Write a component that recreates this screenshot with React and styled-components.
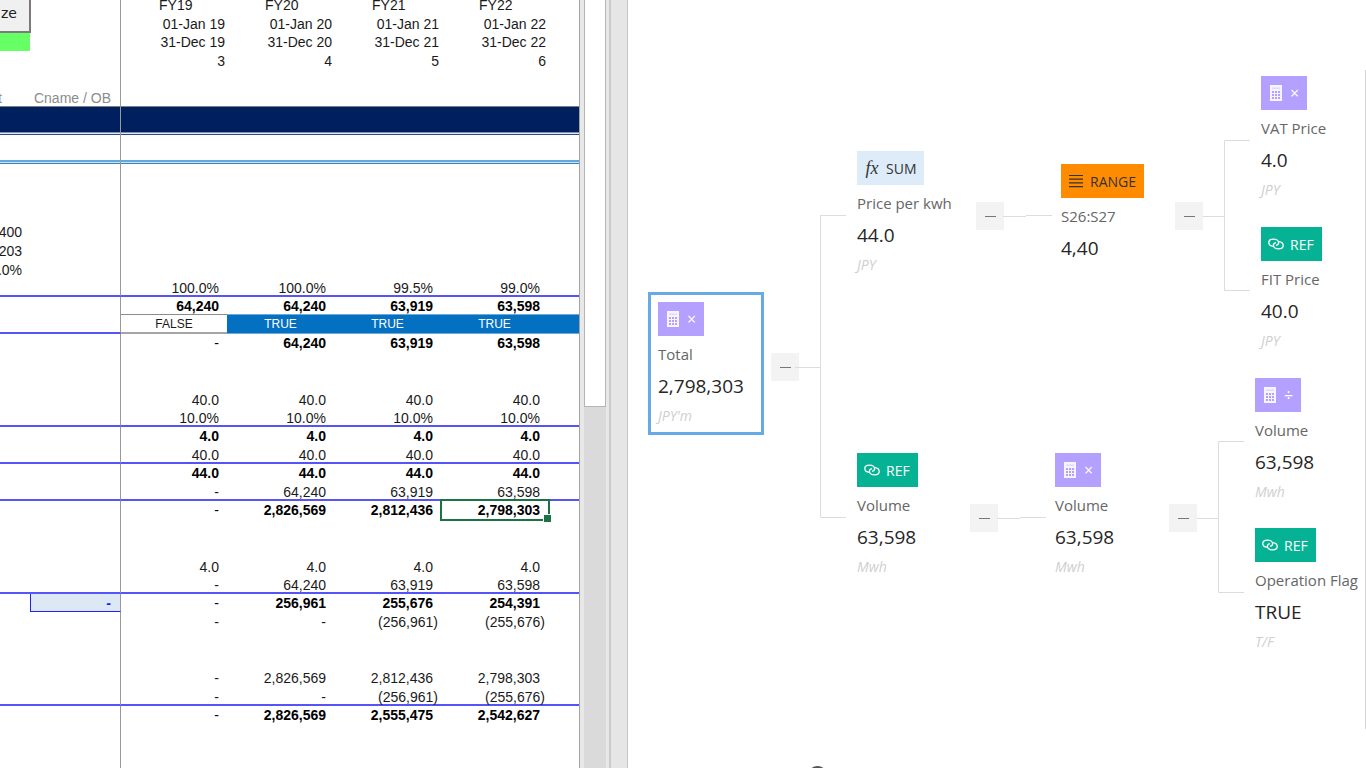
import React from 'react';
import styled, { createGlobalStyle } from 'styled-components';

const columns = [30, 91, 106, 107, 107, 107, 31];

// a, b: the two columns left of the freeze line, v: the four yearly values
const rows = [
  { h: 19, v: ['FY19', 'FY20', 'FY21', 'FY22'], kind: 'year', button: true },
  { h: 19, v: ['01-Jan 19', '01-Jan 20', '01-Jan 21', '01-Jan 22'], kind: 'date', underButton: true },
  { h: 18, v: ['31-Dec 19', '31-Dec 20', '31-Dec 21', '31-Dec 22'], kind: 'date', check: true },
  { h: 20, v: ['3', '4', '5', '6'], kind: 'date' },
  { h: 19 },
  { h: 17, a: 't', b: 'Cname / OB', kind: 'caption', line: 'grey' },
  { h: 28, band: 'navy' },
  { h: 29, band: 'sky' },
  { h: 58 },
  { h: 19, a: '400' },
  { h: 20, a: '203' },
  { h: 18, a: '.0%' },
  { h: 18, v: ['100.0%', '100.0%', '99.5%', '99.0%'], line: 'blue' },
  { h: 17, v: ['64,240', '64,240', '63,919', '63,598'], bold: true },
  { h: 20, v: ['FALSE', 'TRUE', 'TRUE', 'TRUE'], kind: 'flag', line: 'blue' },
  { h: 18, v: ['-', '64,240', '63,919', '63,598'], bold: true },
  { h: 38 },
  { h: 19, v: ['40.0', '40.0', '40.0', '40.0'] },
  { h: 18, v: ['10.0%', '10.0%', '10.0%', '10.0%'], line: 'blue' },
  { h: 18, v: ['4.0', '4.0', '4.0', '4.0'], bold: true },
  { h: 19, v: ['40.0', '40.0', '40.0', '40.0'], line: 'blue' },
  { h: 18, v: ['44.0', '44.0', '44.0', '44.0'], bold: true },
  { h: 19, v: ['-', '64,240', '63,919', '63,598'], line: 'blue' },
  { h: 18, v: ['-', '2,826,569', '2,812,436', '2,798,303'], bold: true, selected: 3 },
  { h: 38 },
  { h: 19, v: ['4.0', '4.0', '4.0', '4.0'] },
  { h: 18, v: ['-', '64,240', '63,919', '63,598'], line: 'blue' },
  { h: 18, b: '-', v: ['-', '256,961', '255,676', '254,391'], bold: true, entry: true },
  { h: 19, v: ['-', '-', '(256,961)', '(255,676)'] },
  { h: 38 },
  { h: 18, v: ['-', '2,826,569', '2,812,436', '2,798,303'] },
  { h: 19, v: ['-', '-', '(256,961)', '(255,676)'], line: 'blue' },
  { h: 17, v: ['-', '2,826,569', '2,555,475', '2,542,627'], bold: true },
  { h: 60 },
];

const nodes = [
  { x: 30, y: 302, type: 'calc', op: '×', label: 'Total', value: '2,798,303', unit: "JPY'm", active: true },
  { x: 229, y: 151, type: 'sum', op: 'SUM', label: 'Price per kwh', value: '44.0', unit: 'JPY' },
  { x: 229, y: 453, type: 'ref', op: 'REF', label: 'Volume', value: '63,598', unit: 'Mwh' },
  { x: 433, y: 164, type: 'range', op: 'RANGE', label: 'S26:S27', value: '4,40' },
  { x: 427, y: 453, type: 'calc', op: '×', label: 'Volume', value: '63,598', unit: 'Mwh' },
  { x: 633, y: 76, type: 'calc', op: '×', label: 'VAT Price', value: '4.0', unit: 'JPY' },
  { x: 633, y: 227, type: 'ref', op: 'REF', label: 'FIT Price', value: '40.0', unit: 'JPY' },
  { x: 627, y: 378, type: 'calc', op: '÷', label: 'Volume', value: '63,598', unit: 'Mwh' },
  { x: 627, y: 528, type: 'ref', op: 'REF', label: 'Operation Flag', value: 'TRUE', unit: 'T/F' },
];

const toggles = [
  { x: 143, y: 353 },
  { x: 348, y: 202 },
  { x: 547, y: 202 },
  { x: 342, y: 504 },
  { x: 541, y: 504 },
];

const badgeColors = {
  calc: { bg: '#b3a0ff', fg: '#ffffff' },
  sum: { bg: '#deebf9', fg: '#333333' },
  ref: { bg: '#06b294', fg: '#ffffff' },
  range: { bg: '#ff8c00', fg: '#333333' },
};

function BadgeIcon({ type }) {
  if (type === 'sum') {
    return <Fx>fx</Fx>;
  }
  if (type === 'range') {
    return (
      <svg width="14" height="14" viewBox="0 0 14 14" stroke="#333" strokeWidth="1.2">
        <path d="M0 1.5h14M0 5.2h14M0 8.9h14M0 12.6h14" />
      </svg>
    );
  }
  if (type === 'ref') {
    return (
      <svg width="16" height="12" viewBox="0 0 16 12" fill="none" stroke="#fff" strokeWidth="1.3">
        <path d="M5.4 8.3C2.6 8.1.8 6.6.8 4.5.8 2.4 2.8 1.1 5.4 1.1c2.9 0 5.2 1.5 5.2 3.6 0 1.4-1 2.3-2.5 2.7" />
        <path d="M10.6 3.7c2.8.2 4.6 1.7 4.6 3.8 0 2.1-2 3.4-4.6 3.4-2.9 0-5.2-1.5-5.2-3.6 0-1.4 1-2.3 2.5-2.7" />
      </svg>
    );
  }
  return (
    <svg width="12" height="16" viewBox="0 0 12 16">
      <path d="M0 0h12v16H0z" fill="#fff" fillOpacity=".88" />
      <path d="M2 2.5h8V4H2z" fill="#e0d8ff" />
      <path
        d="M2 6h2v2H2zM5 6h2v2H5zM8 6h2v2H8zM2 9h2v2H2zM5 9h2v2H5zM8 9h2v2H8zM2 12h2v2H2zM5 12h2v2H5zM8 12h2v2H8z"
        fill="#b3a0ff"
      />
    </svg>
  );
}

function SheetRow({ row }) {
  const values = row.v || ['', '', '', ''];
  return (
    <Row $h={row.h} $line={row.line} $band={row.band} $bold={row.bold} $kind={row.kind}>
      {row.button && (
        <ButtonCell rowSpan={2}>
          <SheetButton type="button">ze</SheetButton>
        </ButtonCell>
      )}
      {!row.button && !row.underButton && (
        <SideCell $check={row.check} $kind={row.kind}>
          {row.a && <SideText>{row.a}</SideText>}
        </SideCell>
      )}
      <FrozenCell $entry={row.entry}>{row.b}</FrozenCell>
      {values.map((value, i) => (
        <ValueCell
          key={i}
          $kind={row.kind}
          $on={value === 'TRUE'}
          $dash={value === '-'}
          $wide={value.startsWith('(')}
        >
          {value}
          {row.selected === i && <Selection />}
        </ValueCell>
      ))}
      <ValueCell $kind={row.kind} $on={row.kind === 'flag'} />
    </Row>
  );
}

function TreeNode({ node }) {
  return (
    <Node style={{ left: node.x, top: node.y }} $active={node.active}>
      <Badge $type={node.type}>
        <IconSlot>
          <BadgeIcon type={node.type} />
        </IconSlot>
        <Op $sign={node.type === 'calc'}>{node.op}</Op>
      </Badge>
      <Label>{node.label}</Label>
      <Value>{node.value}</Value>
      {node.unit && <Unit>{node.unit}</Unit>}
    </Node>
  );
}

function App() {
  return (
    <Page>
      <GlobalStyle />
      <Sheet>
        <Grid>
          <colgroup>
            {columns.map((width, i) => (
              <Column key={i} $w={width} />
            ))}
          </colgroup>
          <tbody>
            {rows.map((row, i) => (
              <SheetRow key={i} row={row} />
            ))}
          </tbody>
        </Grid>
      </Sheet>
      <ScrollArea>
        <Track>
          <Thumb />
        </Track>
      </ScrollArea>
      <Splitter />
      <Canvas>
        {toggles.map((toggle, i) => (
          <Toggle key={i} type="button" aria-label="Collapse" style={{ left: toggle.x, top: toggle.y }} />
        ))}
        <Links width="738" height="768" viewBox="0 0 738 768">
          <path d="M167 367.5H192M218 215.5H192.5V517.5H218" />
          <path d="M375 216.5H398M398 215.5H424" />
          <path d="M369 518.5H392M392 517.5H418" />
          <path d="M575 216.5H596M622 140.5H596.5V290.5H622" />
          <path d="M569 518.5H590M616 441.5H590.5V592.5H616" />
          <circle cx="189.5" cy="776" r="9" />
        </Links>
        {nodes.map((node, i) => (
          <TreeNode key={i} node={node} />
        ))}
        <Edge />
      </Canvas>
    </Page>
  );
}

export default App;

const GlobalStyle = createGlobalStyle`
  * {
    box-sizing: border-box;
  }

  body {
    margin: 0;
    background: #fff;
  }
`

const Page = styled.div`
  display: flex;
  height: 100vh;
  overflow: hidden;
`

const Sheet = styled.div`
  flex: none;
  overflow: hidden;
  border-right: 1px solid #a3a3a3;
`

/* the sheet is scrolled a few pixels into its first row */
const Grid = styled.table`
  width: 579px;
  margin-top: -5px;
  table-layout: fixed;
  border-spacing: 0;
  font-family: "Liberation Sans", Arial, sans-serif;
  font-size: 14px;
  line-height: 14px;
  color: #1a1a1a;

  td {
    padding: 0;
    white-space: nowrap;
  }
`

const Column = styled.col`
  width: ${({ $w }) => $w}px;
`

const lineStyles = {
  blue: '2px solid #5454fa',
  grey: '1px solid #7f7f7f',
}

const bands = {
  navy: 'linear-gradient(to top, #2c4a86 1px, #e4e8f1 1px 2px, #7f8fb5 2px 3px, #001f5f 3px)',
  sky: 'linear-gradient(to top, #3384c0 1px, #cfe4f3 1px 2px, #62a9d9 2px 4px, #fff 4px)',
}

const Row = styled.tr`
  height: ${({ $h }) => $h}px;
  font-weight: ${({ $bold }) => ($bold ? 700 : 400)};
  color: ${({ $kind, $bold }) => ($kind === 'caption' ? '#8c8c8c' : $bold ? '#000' : 'inherit')};

  td {
    padding-top: ${({ $line, $kind }) => ($line === 'blue' && $kind !== 'flag' ? 2 : 0)}px;
    border-bottom: ${({ $line }) => lineStyles[$line] || 'none'};
    background: ${({ $band }) => bands[$band] || 'none'};
  }
`

const ButtonCell = styled.td`
  vertical-align: top;
`

const SheetButton = styled.button`
  display: block;
  width: 31px;
  height: 38px;
  padding: 0 0 0 1px;
  border: 0;
  border-right: 2px solid #7a7a7a;
  border-bottom: 2px solid #7a7a7a;
  background: #f0f0f0;
  font-family: "DejaVu Sans", Verdana, sans-serif;
  font-size: 14px;
  text-align: left;
  color: #222;
`

const SideCell = styled.td`
  ${Row} & {
    padding-right: ${({ $kind }) => ($kind === 'caption' ? 28 : 8)}px;
    background-color: ${({ $check }) => ($check ? '#66ff66' : 'transparent')};
  }
`

/* runs out to the left, where the sheet is scrolled away */
const SideText = styled.div`
  display: flex;
  justify-content: flex-end;
`

const FrozenCell = styled.td`
  ${Row} & {
    padding-right: 9px;
    border-right: 1px solid #999;
    text-align: right;
    ${({ $entry }) => $entry && `
      border-left: 1px solid #2020f5;
      border-bottom: 1px solid #2020f5;
      background: #dce9f5;
      color: #2020f5;
    `}
  }
`

const ValueCell = styled.td`
  position: relative;

  ${Row} & {
    padding-right: ${({ $kind, $wide }) => ($kind === 'date' ? 2 : $wide ? 3 : 8)}px;
    text-align: right;
    ${({ $dash }) => $dash && 'font-weight: 400;'}
    ${({ $kind }) => $kind === 'year' && `
      padding-left: 38px;
      text-align: left;
    `}
    ${({ $kind, $on }) => $kind === 'flag' && `
      padding-right: 0;
      border-top: 1px solid ${$on ? '#6aa9d8' : '#8c8c8c'};
      border-bottom: ${$on ? '1px solid #6aa9d8' : '2px solid #a6a6a6'};
      background: ${$on ? '#0470c2' : '#fff'};
      color: ${$on ? '#fff' : '#1a1a1a'};
      font-size: 12px;
      text-align: center;
    `}
  }
`

const Selection = styled.span`
  position: absolute;
  inset: -2px -2px -2px -1px;
  border: 2px solid #1b7343;

  &::after {
    content: "";
    position: absolute;
    right: -3px;
    bottom: -3px;
    width: 7px;
    height: 7px;
    border: 1px solid #fff;
    border-right: 0;
    border-bottom: 0;
    background: #1b7343;
  }
`

const ScrollArea = styled.div`
  flex: none;
  width: 31px;
  padding: 0 3px 0 4px;
  border-right: 2px solid #cbcbcb;
  background: #e8e8e8;
`

const Track = styled.div`
  height: 100%;
  background: #dadada;
`

const Thumb = styled.div`
  height: 53%;
  border: 1px solid #b5b5b5;
  border-top: 0;
  background: #fff;
`

const Splitter = styled.div`
  flex: none;
  width: 17px;
  border-right: 1px solid #c6c6c6;
  background: #e6e6e6;
`

const Canvas = styled.div`
  flex: 1;
  position: relative;
  overflow: hidden;
  font-family: "Open Sans", "Segoe UI", sans-serif;
`

const Links = styled.svg`
  position: absolute;
  top: 0;
  left: 0;
  fill: none;
  stroke: #dcdcdc;
  pointer-events: none;

  circle {
    stroke: #555;
    stroke-width: 2;
  }
`

const Edge = styled.div`
  position: absolute;
  top: 70px;
  right: 0;
  bottom: 39px;
  width: 1px;
  background: #d4d4d4;
`

const Toggle = styled.button`
  position: absolute;
  display: flex;
  align-items: center;
  justify-content: center;
  width: 28px;
  height: 28px;
  padding: 0;
  border: 0;
  background: #f3f3f3;

  &::before {
    content: "";
    width: 11px;
    height: 1px;
    background: #777;
  }
`

const Node = styled.div`
  position: absolute;
  white-space: nowrap;

  ${({ $active }) => $active && `
    margin: -10px;
    padding: 7px 17px 6px 7px;
    border: 3px solid #67abe6;
  `}
`

const Badge = styled.div`
  display: inline-flex;
  align-items: center;
  gap: 6px;
  height: 34px;
  padding: 0 8px 0 7px;
  vertical-align: top;
  background: ${({ $type }) => badgeColors[$type].bg};
  color: ${({ $type }) => badgeColors[$type].fg};
`

const IconSlot = styled.span`
  display: flex;
  align-items: center;
  justify-content: center;
  width: 16px;
  height: 16px;
`

const Op = styled.span`
  padding-top: ${({ $sign }) => ($sign ? 0 : 2)}px;
  font-size: ${({ $sign }) => ($sign ? 16 : 14)}px;
  line-height: 20px;
`

const Fx = styled.i`
  font-family: "Liberation Serif", serif;
  font-size: 18px;
  line-height: 16px;
`

const Label = styled.div`
  margin-top: 6px;
  font-size: 15px;
  line-height: 24px;
  color: #666;
`

const Value = styled.div`
  font-size: 19px;
  line-height: 40px;
  color: #262626;
`

const Unit = styled.div`
  font-size: 14px;
  font-style: italic;
  line-height: 20px;
  color: #cfcfcf;
`
